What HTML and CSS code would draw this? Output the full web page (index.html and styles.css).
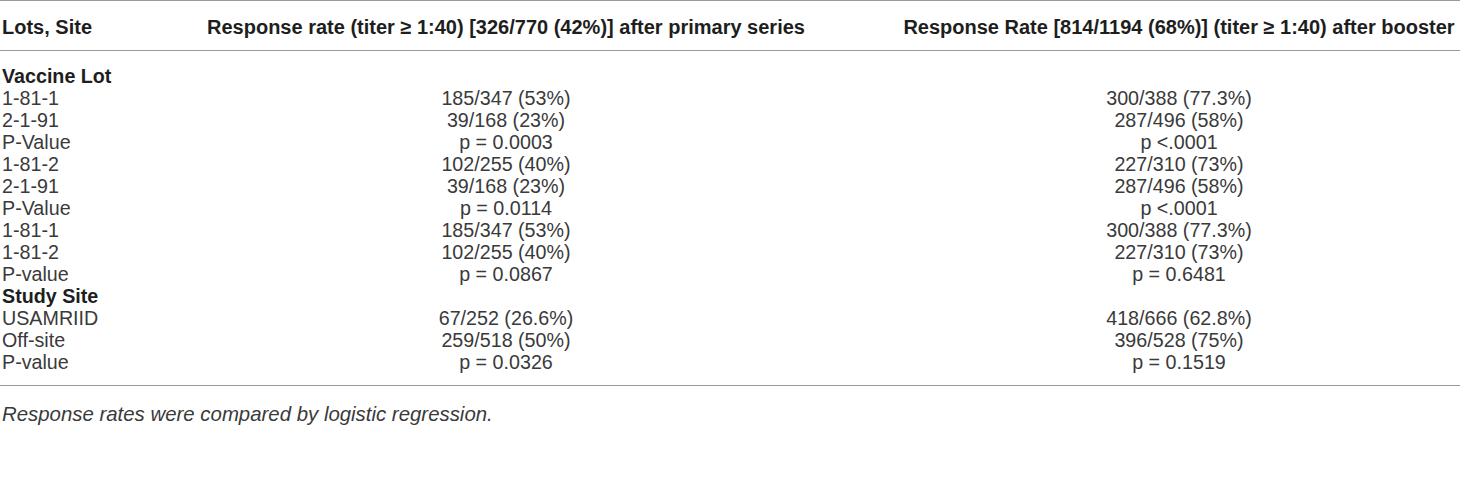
FILE: index.html
```html
<!DOCTYPE html>
<html>
<head>
<meta charset="utf-8">
<link rel="stylesheet" href="styles.css">
</head>
<body>
<div class="wrap">
<table class="data">
  <colgroup>
    <col class="c1">
    <col class="c2">
    <col class="c3">
  </colgroup>
  <thead>
    <tr>
      <th class="left">Lots, Site</th>
      <th>Response rate (titer ≥ 1:40) [326/770 (42%)] after primary series</th>
      <th>Response Rate [814/1194 (68%)] (titer ≥ 1:40) after booster</th>
    </tr>
  </thead>
  <tbody>
    <tr class="first"><td class="group">Vaccine Lot</td><td></td><td></td></tr>
    <tr><td>1-81-1</td><td>185/347 (53%)</td><td>300/388 (77.3%)</td></tr>
    <tr><td>2-1-91</td><td>39/168 (23%)</td><td>287/496 (58%)</td></tr>
    <tr><td>P-Value</td><td>p = 0.0003</td><td>p &lt;.0001</td></tr>
    <tr><td>1-81-2</td><td>102/255 (40%)</td><td>227/310 (73%)</td></tr>
    <tr><td>2-1-91</td><td>39/168 (23%)</td><td>287/496 (58%)</td></tr>
    <tr><td>P-Value</td><td>p = 0.0114</td><td>p &lt;.0001</td></tr>
    <tr><td>1-81-1</td><td>185/347 (53%)</td><td>300/388 (77.3%)</td></tr>
    <tr><td>1-81-2</td><td>102/255 (40%)</td><td>227/310 (73%)</td></tr>
    <tr><td>P-value</td><td>p = 0.0867</td><td>p = 0.6481</td></tr>
    <tr><td class="group">Study Site</td><td></td><td></td></tr>
    <tr><td>USAMRIID</td><td>67/252 (26.6%)</td><td>418/666 (62.8%)</td></tr>
    <tr><td>Off-site</td><td>259/518 (50%)</td><td>396/528 (75%)</td></tr>
    <tr class="last"><td>P-value</td><td>p = 0.0326</td><td>p = 0.1519</td></tr>
  </tbody>
</table>
<p class="note">Response rates were compared by logistic regression.</p>
</div>
</body>
</html>
```

FILE: styles.css
```css
html, body {
  margin: 0;
  padding: 0;
  background: #ffffff;
}
body {
  font-family: "Liberation Sans", Arial, Helvetica, sans-serif;
  font-size: 19.7px;
  color: #3a3a3a;
}
.wrap {
  width: 1460px;
}
.data {
  width: 1460px;
  border-collapse: collapse;
  table-layout: fixed;
  border-top: 1px solid #9a9a9a;
  border-bottom: 1px solid #9a9a9a;
}
.c1 { width: 114px; }
.c2 { width: 784px; }
.c3 { width: 562px; }
.data th {
  font-size: 20px;
  font-weight: bold;
  color: #1e1e1e;
  text-align: center;
  line-height: 22px;
  padding: 15px 2px 12px;
  border-bottom: 1px solid #9a9a9a;
  white-space: nowrap;
}
.data th.left { text-align: left; }
.data td {
  line-height: 22px;
  padding: 0 2px;
  text-align: center;
  white-space: nowrap;
}
.data td:first-child { text-align: left; }
.data td.group {
  font-weight: bold;
  color: #1e1e1e;
}
.data tr.first td { padding-top: 14px; }
.data tr.last td { padding-bottom: 12px; }
.note {
  margin: 17px 0 0;
  padding: 0 2px;
  font-size: 20.4px;
  font-style: italic;
  line-height: 22px;
}
```
